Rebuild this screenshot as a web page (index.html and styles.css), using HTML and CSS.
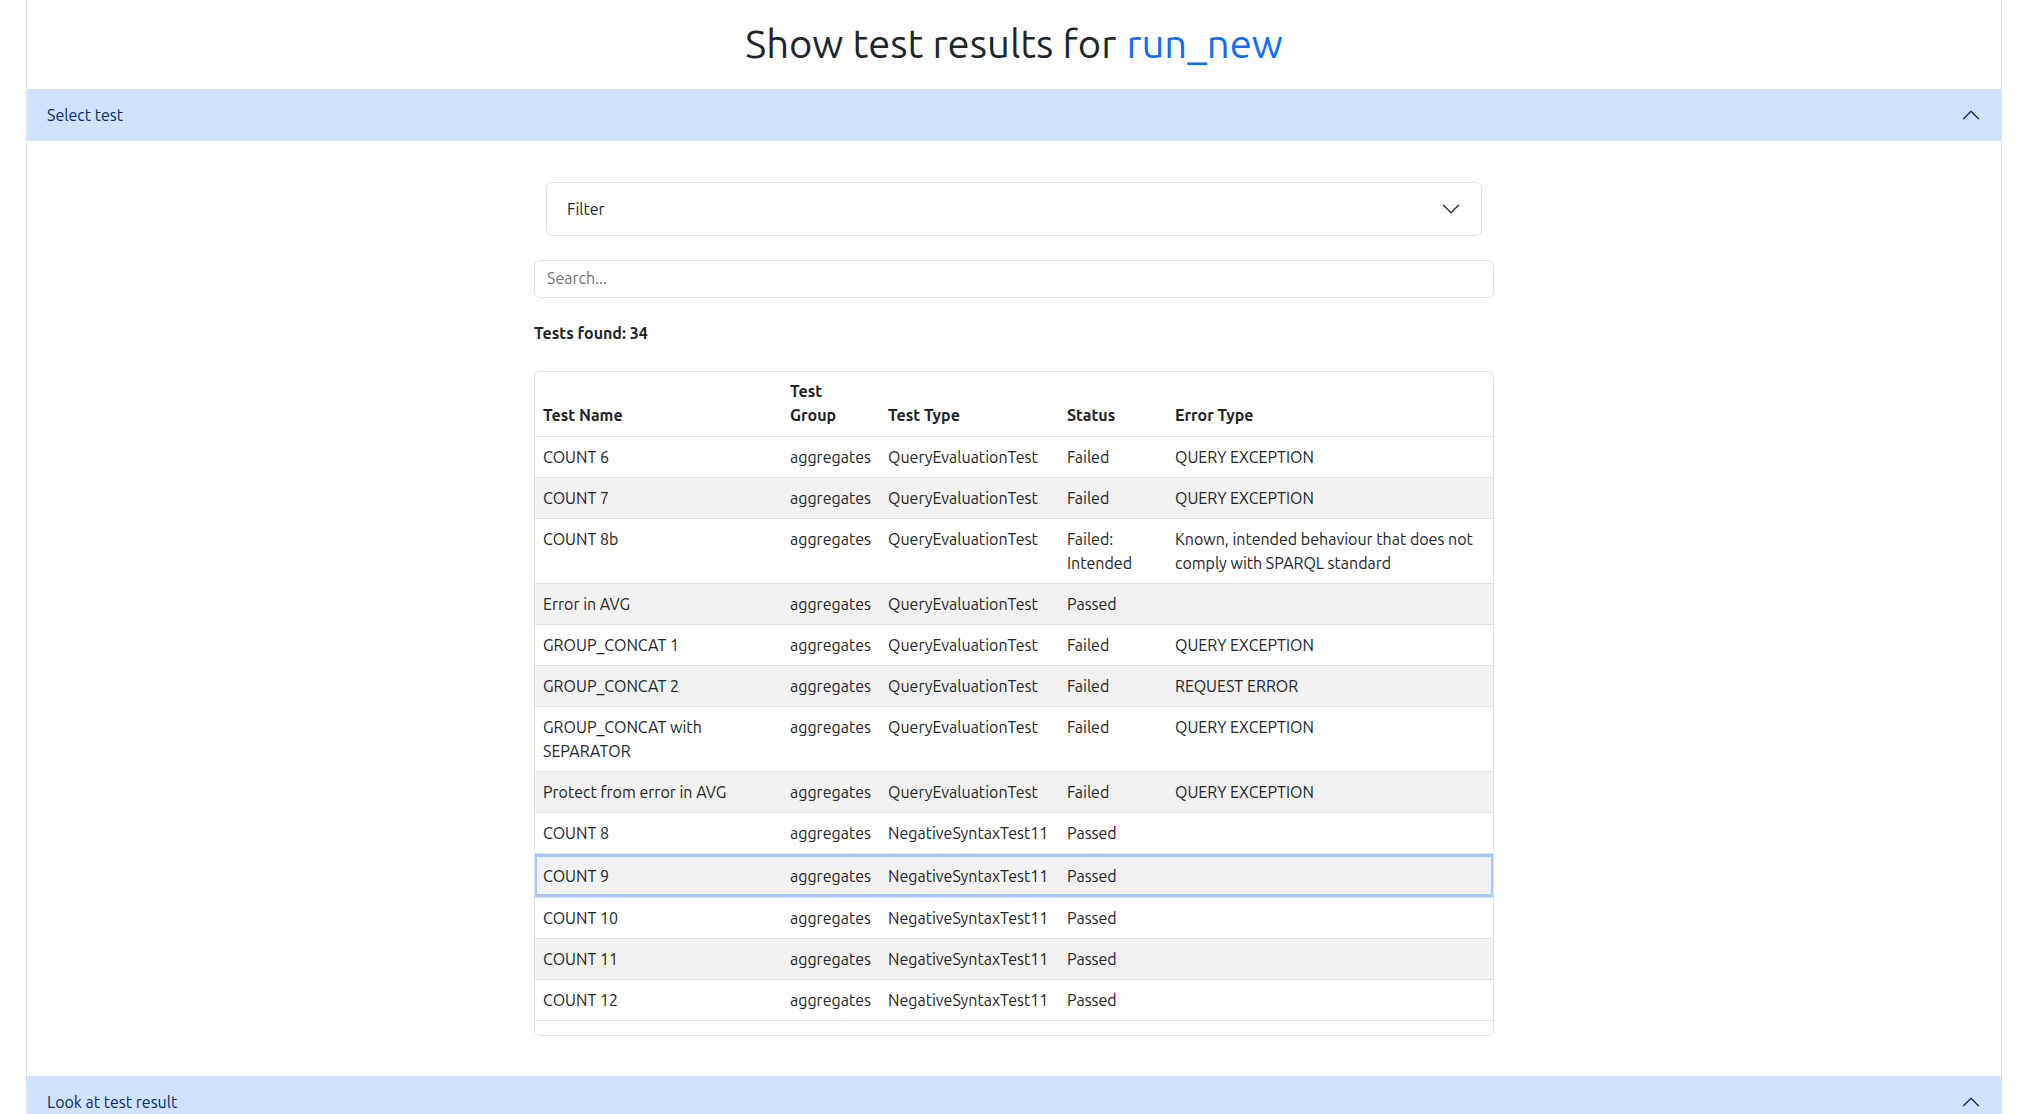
FILE: index.html
```html
<!DOCTYPE html>
<html lang="en">
<head>
<meta charset="utf-8">
<title>Show test results</title>
<link rel="stylesheet" href="styles.css">
</head>
<body>
<div class="page">
  <h1 class="title">Show test results for <span class="run">run_new</span></h1>

  <section class="acc-item">
    <div class="acc-btn">
      <span>Select test</span>
      <svg class="chev up" viewBox="0 0 16 16" fill="none" stroke="#052c65" stroke-linecap="round" stroke-linejoin="round"><path d="M2 5L8 11L14 5"/></svg>
    </div>
    <div class="acc-body">
      <div class="inner">
        <div class="filter">
          <span>Filter</span>
          <svg class="chev" viewBox="0 0 16 16" fill="none" stroke="#212529" stroke-linecap="round" stroke-linejoin="round"><path d="M2 5L8 11L14 5"/></svg>
        </div>
        <input class="search" type="text" placeholder="Search...">
        <p class="found">Tests found: 34</p>
        <div class="table-wrap">
          <table class="results">
            <colgroup>
              <col class="c-name"><col class="c-group"><col class="c-type"><col class="c-status"><col>
            </colgroup>
            <thead>
              <tr><th>Test Name</th><th>Test<br>Group</th><th>Test Type</th><th>Status</th><th>Error Type</th></tr>
            </thead>
            <tbody>
              <tr><td>COUNT 6</td><td>aggregates</td><td>QueryEvaluationTest</td><td>Failed</td><td>QUERY EXCEPTION</td></tr>
              <tr><td>COUNT 7</td><td>aggregates</td><td>QueryEvaluationTest</td><td>Failed</td><td>QUERY EXCEPTION</td></tr>
              <tr><td>COUNT 8b</td><td>aggregates</td><td>QueryEvaluationTest</td><td>Failed:<br>Intended</td><td>Known, intended behaviour that does not comply with SPARQL standard</td></tr>
              <tr><td>Error in AVG</td><td>aggregates</td><td>QueryEvaluationTest</td><td>Passed</td><td></td></tr>
              <tr><td>GROUP_CONCAT 1</td><td>aggregates</td><td>QueryEvaluationTest</td><td>Failed</td><td>QUERY EXCEPTION</td></tr>
              <tr><td>GROUP_CONCAT 2</td><td>aggregates</td><td>QueryEvaluationTest</td><td>Failed</td><td>REQUEST ERROR</td></tr>
              <tr><td>GROUP_CONCAT with<br>SEPARATOR</td><td>aggregates</td><td>QueryEvaluationTest</td><td>Failed</td><td>QUERY EXCEPTION</td></tr>
              <tr><td>Protect from error in AVG</td><td>aggregates</td><td>QueryEvaluationTest</td><td>Failed</td><td>QUERY EXCEPTION</td></tr>
              <tr><td>COUNT 8</td><td>aggregates</td><td>NegativeSyntaxTest11</td><td>Passed</td><td></td></tr>
              <tr class="selected"><td>COUNT 9</td><td>aggregates</td><td>NegativeSyntaxTest11</td><td>Passed</td><td></td></tr>
              <tr><td>COUNT 10</td><td>aggregates</td><td>NegativeSyntaxTest11</td><td>Passed</td><td></td></tr>
              <tr><td>COUNT 11</td><td>aggregates</td><td>NegativeSyntaxTest11</td><td>Passed</td><td></td></tr>
              <tr><td>COUNT 12</td><td>aggregates</td><td>NegativeSyntaxTest11</td><td>Passed</td><td></td></tr>
              <tr class="spacer"><td></td><td></td><td></td><td></td><td></td></tr>
            </tbody>
          </table>
        </div>
      </div>
    </div>
  </section>

  <section class="acc-item">
    <div class="acc-btn">
      <span>Look at test result</span>
      <svg class="chev up" viewBox="0 0 16 16" fill="none" stroke="#052c65" stroke-linecap="round" stroke-linejoin="round"><path d="M2 5L8 11L14 5"/></svg>
    </div>
  </section>
</div>
</body>
</html>
```

FILE: styles.css
```css
html, body {
  margin: 0;
  padding: 0;
  background: #fff;
}
body {
  font-family: Ubuntu, Lato, "Open Sans", sans-serif;
  font-size: 16px;
  line-height: 24px;
  color: #212529;
}
.page {
  margin: 0 31px 0 26px;
  border-left: 1px solid #dee2e6;
  border-right: 1px solid #dee2e6;
  min-height: 100vh;
}
.title {
  margin: 0;
  height: 87px;
  padding-bottom: 2px;
  display: flex;
  align-items: center;
  justify-content: center;
  font-size: 40px;
  font-weight: 400;
  line-height: 48px;
  color: #212529;
}
.title .run {
  color: #0d6efd;
  margin-left: 0.25em;
}
.acc-btn {
  display: flex;
  align-items: center;
  justify-content: space-between;
  height: 52px;
  padding: 0 20px;
  background: #cfe2ff;
  color: #052c65;
  box-shadow: inset 0 -1px 0 #dee2e6;
}
.chev {
  width: 20px;
  height: 20px;
  flex: none;
}
.chev.up {
  transform: rotate(180deg);
}
.acc-body {
  padding: 41px 0 40px;
}
.inner {
  width: 960px;
  margin: 0 auto;
}
.filter {
  margin: 0 12px;
  height: 54px;
  box-sizing: border-box;
  border: 1px solid #dee2e6;
  border-radius: 6px;
  display: flex;
  align-items: center;
  justify-content: space-between;
  padding: 0 20px;
}
.search {
  display: block;
  width: 100%;
  box-sizing: border-box;
  height: 38px;
  margin: 24px 0 0;
  padding: 5px 12px 7px;
  border: 1px solid #dee2e6;
  border-radius: 6px;
  font: inherit;
  color: #212529;
  background: #fff;
  outline: none;
}
.search::placeholder {
  color: #6c757d;
}
.found {
  margin: 23px 0 26px;
  font-weight: 700;
}
.table-wrap {
  height: 665px;
  box-sizing: border-box;
  border: 1px solid #dee2e6;
  border-radius: 6px;
  overflow: hidden;
}
.results {
  width: 100%;
  border-collapse: collapse;
  table-layout: fixed;
}
.c-name { width: 247px; }
.c-group { width: 98px; }
.c-type { width: 179px; }
.c-status { width: 108px; }
.results th,
.results td {
  padding: 8px;
  text-align: left;
  vertical-align: top;
  border-bottom: 1px solid #dee2e6;
}
.results th {
  padding: 7px 8px 9px;
  vertical-align: bottom;
  font-weight: 700;
}
.results tbody tr:nth-child(even) td {
  background: #f2f2f2;
}
.results tr.selected td {
  padding: 10px 8px 9px;
  box-shadow: inset 0 3px 0 #a5c8fb, inset 0 -3px 0 #a5c8fb;
}
.results tr.selected td:first-child {
  box-shadow: inset 0 3px 0 #a5c8fb, inset 0 -3px 0 #a5c8fb, inset 2px 0 0 #a5c8fb;
}
.results tr.selected td:last-child {
  box-shadow: inset 0 3px 0 #a5c8fb, inset 0 -3px 0 #a5c8fb, inset -2px 0 0 #a5c8fb;
}
.results tbody tr.spacer td {
  height: 24px;
  background: #fff;
}
```
